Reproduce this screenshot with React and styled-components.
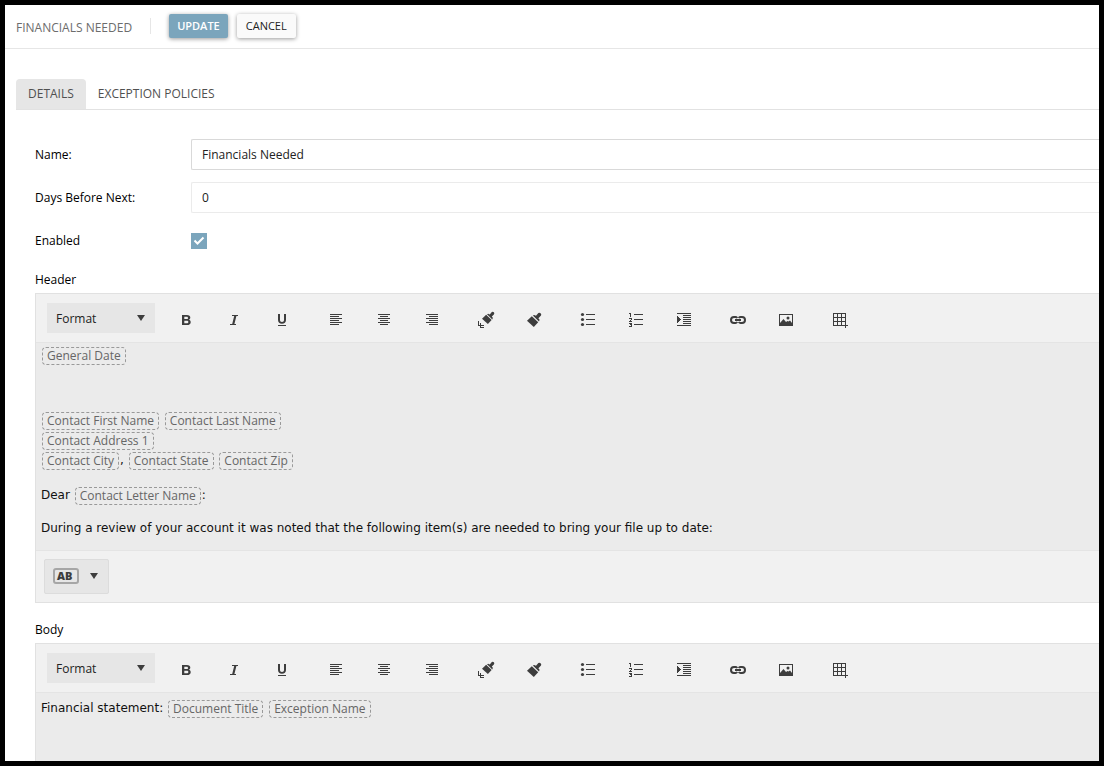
import React from "react";
import styled, { createGlobalStyle, css } from "styled-components";

const ui = `"Open Sans", "Noto Sans", sans-serif`;
const letter = `"DejaVu Sans", Verdana, sans-serif`;
const ink = "#3d3d3d";

const GlobalStyle = createGlobalStyle`
  *, *::before, *::after { box-sizing: border-box; }
  body { margin: 0; font-family: ${ui}; font-size: 12px; font-weight: 500; color: #000; background: #000; }
  button, input, select { font: inherit; }
`;

const Page = styled.div`
  height: 100vh;
  overflow: hidden;
  border: 5px solid #000;
  background: #fff;
`;

const TitleBar = styled.header`
  display: flex;
  align-items: center;
  height: 44px;
  padding: 0 11px 1px;
  border-bottom: 1px solid #e6e6e6;
`;

const Title = styled.h1`
  margin: 0;
  padding: 4px 18px 0 0;
  font-size: 12px;
  line-height: 16px;
  font-weight: 500;
  color: #6c6c6c;
`;

const Divider = styled.span`
  width: 1px;
  height: 16px;
  margin-right: 18px;
  background: #e6e6e6;
`;

const ActionButton = styled.button`
  height: 24px;
  margin-right: 9px;
  padding: 0 ${(p) => (p.$primary ? "8px" : "9px")};
  border: 0;
  border-radius: 2px;
  font-size: 11px;
  line-height: 24px;
  font-weight: ${(p) => (p.$primary ? 600 : 500)};
  color: ${(p) => (p.$primary ? "#fff" : "#222")};
  background: ${(p) => (p.$primary ? "#7ba5bc" : "#fafafa")};
  box-shadow: 0 1px 4px rgba(0, 0, 0, 0.4);
`;

const Tabs = styled.nav`
  display: flex;
  margin: 30px 0 0 11px;
  border-bottom: 1px solid #e2e2e2;
`;

const Tab = styled.button`
  height: 30px;
  padding: 0 12px 2px;
  border: 0;
  border-radius: 4px 4px 0 0;
  color: #505050;
  background: ${(p) => (p.$active ? "#e6e6e6" : "transparent")};
`;

const Form = styled.form`
  padding: 29px 0 0 30px;
`;

const Field = styled.div`
  display: flex;
  align-items: center;
  height: 31px;
  margin-bottom: 12px;
`;

const FieldLabel = styled.label`
  width: 156px;
  flex: none;
`;

const TextInput = styled.input`
  flex: 1;
  min-width: 0;
  height: 31px;
  padding: 0 10px;
  border: 1px solid ${(p) => (p.$soft ? "#ebebeb" : "#d9d9d9")};
  border-right: 0;
  border-radius: 2px 0 0 2px;
  color: #222;
  background: #fff;
`;

const CheckBoxWrap = styled.span`
  display: grid;
  width: 16px;
  height: 16px;

  > * { grid-area: 1 / 1; }
  svg { pointer-events: none; visibility: hidden; }
  input:checked + svg { visibility: visible; }
`;

const CheckBox = styled.input`
  appearance: none;
  width: 16px;
  height: 16px;
  margin: 0;
  border: 1px solid #7ba5bc;
  &:checked { background: #7ba5bc; }
`;

const EditorSection = styled.section`
  margin-bottom: 15px;
`;

const EditorLabel = styled.h2`
  margin: 0 0 1px;
  font-size: 12px;
  line-height: 24px;
  font-weight: 500;
`;

const EditorFrame = styled.div`
  border: 1px solid #e1e1e1;
  border-right: 0;
  background: #f1f1f1;
`;

const Toolbar = styled.div`
  display: flex;
  align-items: center;
  gap: 6px;
  height: 49px;
  padding-left: 11px;
  border-bottom: 1px solid #e4e4e4;
`;

const FormatWrap = styled.span`
  display: grid;
  align-items: center;
  width: 108px;

  > * { grid-area: 1 / 1; }
  svg { justify-self: end; margin-right: 9px; pointer-events: none; }
`;

const FormatSelect = styled.select`
  appearance: none;
  width: 108px;
  height: 30px;
  padding: 0 9px;
  border: 0;
  color: #222;
  background: #e6e6e6;
`;

const ToolGroup = styled.div`
  display: flex;
`;

const ToolButton = styled.button`
  display: flex;
  align-items: center;
  justify-content: center;
  width: 48px;
  height: 30px;
  padding: 4px 0 0 2px;
  border: 0;
  background: transparent;
  color: ${ink};

  svg { display: block; }
`;

const Content = styled.div`
  min-height: ${(p) => (p.$tall ? "207px" : "0")};
  padding: 2px 5px 13px;
  background: #ebebeb;
  font-family: ${letter};
  font-size: 12px;
  font-weight: 400;
  color: #111;
`;

const Paragraph = styled.p`
  margin: 0;
  min-height: 15px;
  line-height: 20px;

  & + & { margin-top: 15px; }

  ${(p) => p.$leading === "tight" && css`line-height: 17px;`}
  ${(p) => p.$leading === "loose" && css`line-height: 26px;`}
`;

const Chip = styled.span`
  display: inline-block;
  height: 18px;
  margin: 0 1px;
  padding: 0 4px;
  border: 1px dashed #999;
  border-radius: 4px;
  font-family: ${ui};
  font-size: 12px;
  line-height: 16px;
  font-weight: 500;
  color: #666;
  vertical-align: middle;
`;

const EditorFooter = styled.div`
  padding: 8px;
  border-top: 1px solid #e4e4e4;
`;

const FieldButton = styled.button`
  display: flex;
  align-items: center;
  justify-content: space-between;
  width: 65px;
  height: 35px;
  padding: 0 9px 1px 8px;
  border: 1px solid #dcdcdc;
  border-radius: 2px;
  background: #e6e6e6;
`;

const FieldBadge = styled.span`
  width: 26px;
  height: 16px;
  padding-left: 2px;
  border: 2px solid #a6a6a6;
  border-radius: 3px;
  font-size: 11px;
  line-height: 12px;
  font-weight: 800;
  text-align: left;
  color: ${ink};
`;

const Caret = () => (
  <svg width="10" height="8" viewBox="0 0 10 8" aria-hidden="true">
    <path d="M1 1h8L5 7z" fill={ink} />
  </svg>
);

const Icon = ({ children, crisp = true }) => (
  <svg
    width="18"
    height="18"
    viewBox="0 0 18 18"
    fill="currentColor"
    shapeRendering={crisp ? "crispEdges" : "auto"}
    aria-hidden="true"
  >
    {children}
  </svg>
);

const brush = (
  <>
    <path d="M2 9.800 6.800 5.200 13.200 11.200 8.800 16z" />
    <path d="M7.800 4.600 9.200 4 11 4.800 13.400 2Q14.600 1.200 15.800 2.400 16.800 3.600 15.800 4.800L13.400 7.200 14.600 8.800 14 10.600z" />
  </>
);

const icons = {
  bold: (
    <Icon crisp={false}>
      <path fillRule="evenodd" d="M5 4h4.800c2.300 0 3.500.9 3.500 2.600 0 1.100-.6 1.900-1.600 2.200 1.300.3 2 1.200 2 2.400 0 1.900-1.400 2.800-3.700 2.800H5zm2.300 1.700v2.400h2.100c1.100 0 1.600-.4 1.600-1.200s-.5-1.200-1.600-1.200zm0 4v2.600h2.400c1.100 0 1.700-.5 1.700-1.300s-.6-1.300-1.700-1.300z" />
    </Icon>
  ),
  italic: (
    <Icon crisp={false}>
      <path d="M7 4h6v1h-1.600L9.400 13H11v1H5v-1h2.200L9.200 5H7z" />
    </Icon>
  ),
  underline: (
    <Icon crisp={false}>
      <path d="M5 3h2v6c0 1.300.7 2 2 2s2-.7 2-2V3h2v6c0 2.400-1.500 3.700-4 3.700S5 11.400 5 9zM5 14h8v1H5z" />
    </Icon>
  ),
  left: <Icon><path d="M3 3h12v1H3zM3 5h9v1H3zM3 7h12v1H3zM3 9h9v1H3zM3 11h12v1H3zM3 13h9v1H3z" /></Icon>,
  center: <Icon><path d="M3 3h12v1H3zM5 5h8v1H5zM3 7h12v1H3zM5 9h8v1H5zM3 11h12v1H3zM5 13h8v1H5z" /></Icon>,
  right: <Icon><path d="M3 3h12v1H3zM6 5h9v1H6zM3 7h12v1H3zM6 9h9v1H6zM3 11h12v1H3zM6 13h9v1H6z" /></Icon>,
  copyFormat: (
    <Icon crisp={false}>
      <g transform="translate(3.300 -0.700) scale(0.860)">{brush}</g>
      <path d="M1 10h1v4h2v1H1zM3 12h1v4h3v1H3zM4 14h3v1H4z" />
    </Icon>
  ),
  applyFormat: <Icon crisp={false}>{brush}</Icon>,
  bullets: (
    <Icon crisp={false}>
      <circle cx="3.500" cy="3.500" r="1.600" /><circle cx="3.500" cy="8.500" r="1.600" /><circle cx="3.500" cy="13.500" r="1.600" />
      <path d="M7 3h9v1H7zM7 8h9v1H7zM7 13h9v1H7z" />
    </Icon>
  ),
  numbers: (
    <Icon>
      <path d="M7 3h9v1H7zM7 8h9v1H7zM7 13h9v1H7z" />
      <path d="M2 2h2v4H3V3H2zM2 7h3v2H4v1h1v1H2v-1h1V9h1V8H2zM2 12h3v4H2v-1h2v-1H3v-1h1H2z" />
    </Icon>
  ),
  indent: (
    <Icon>
      <path d="M2 2h14v1H2zM8 4h8v1H8zM8 6h8v1H8zM8 8h8v1H8zM8 10h8v1H8zM8 12h8v1H8zM2 14h14v1H2z" />
      <path d="M2 5 6 8.500 2 12z" />
    </Icon>
  ),
  link: (
    <Icon crisp={false}>
      <path d="M8.300 7Q7.500 6 6.500 6H5a3 3 0 0 0 0 6h1.500Q7.500 12 8.300 11M9.700 7Q10.500 6 11.500 6H13a3 3 0 0 1 0 6h-1.500Q10.500 12 9.700 11M6 9h6" fill="none" stroke="currentColor" strokeWidth="2" />
    </Icon>
  ),
  image: (
    <Icon crisp={false}>
      <path fillRule="evenodd" d="M2 3h14v12H2zM3 4v8l3.500-4 2.500 3 1.500-1 1 .5L13 9.500l2 2.500V4z" />
      <circle cx="11" cy="7" r="1.500" />
    </Icon>
  ),
  table: (
    <Icon>
      <path fillRule="evenodd" d="M2 2h13v13H2zM3 3v3h3V3zM7 3v3h3V3zM11 3v3h3V3zM3 7v3h3V7zM7 7v3h3V7zM11 7v3h3V7zM3 11v3h3v-3zM7 11v3h3v-3zM11 11v3h3v-3z" />
      <path d="M12 14h5v1h-5zM14 12h1v5h-1z" />
    </Icon>
  ),
};

const toolGroups = [
  [["bold", "Bold"], ["italic", "Italic"], ["underline", "Underline"]],
  [["left", "Align left"], ["center", "Align center"], ["right", "Align right"]],
  [["copyFormat", "Copy format"], ["applyFormat", "Apply format"]],
  [["bullets", "Bulleted list"], ["numbers", "Numbered list"], ["indent", "Indent"]],
  [["link", "Insert link"], ["image", "Insert image"]],
  [["table", "Insert table"]],
];

function Editor({ label, tall, footer, children }) {
  return (
    <EditorSection>
      <EditorLabel>{label}</EditorLabel>
      <EditorFrame>
        <Toolbar>
          <FormatWrap>
            <FormatSelect aria-label={`${label} format`} defaultValue="Format">
              <option>Format</option>
            </FormatSelect>
            <Caret />
          </FormatWrap>
          {toolGroups.map((group) => (
            <ToolGroup key={group[0][0]}>
              {group.map(([name, title]) => (
                <ToolButton key={name} type="button" aria-label={title}>
                  {icons[name]}
                </ToolButton>
              ))}
            </ToolGroup>
          ))}
        </Toolbar>
        <Content $tall={tall}>{children}</Content>
        {footer && (
          <EditorFooter>
            <FieldButton type="button">
              <FieldBadge>AB</FieldBadge>
              <Caret />
            </FieldButton>
          </EditorFooter>
        )}
      </EditorFrame>
    </EditorSection>
  );
}

export default function App() {
  return (
    <>
      <GlobalStyle />
      <Page>
        <TitleBar>
          <Title>FINANCIALS NEEDED</Title>
          <Divider />
          <ActionButton $primary type="button">UPDATE</ActionButton>
          <ActionButton type="button">CANCEL</ActionButton>
        </TitleBar>
        <Tabs>
          <Tab type="button" $active>DETAILS</Tab>
          <Tab type="button">EXCEPTION POLICIES</Tab>
        </Tabs>
        <Form>
          <Field>
            <FieldLabel htmlFor="name">Name:</FieldLabel>
            <TextInput id="name" defaultValue="Financials Needed" />
          </Field>
          <Field>
            <FieldLabel htmlFor="days">Days Before Next:</FieldLabel>
            <TextInput id="days" $soft defaultValue="0" />
          </Field>
          <Field>
            <FieldLabel htmlFor="enabled">Enabled</FieldLabel>
            <CheckBoxWrap>
              <CheckBox id="enabled" type="checkbox" defaultChecked />
              <svg width="16" height="16" viewBox="0 0 16 16" aria-hidden="true">
                <path d="M3.500 7.500 6.500 10.500 12.500 4.500" fill="none" stroke="#fff" strokeWidth="2" />
              </svg>
            </CheckBoxWrap>
          </Field>
          <Editor label="Header" footer>
            <Paragraph><Chip>General Date</Chip></Paragraph>
            <Paragraph />
            <Paragraph>
              <Chip>Contact First Name</Chip> <Chip>Contact Last Name</Chip><br />
              <Chip>Contact Address 1</Chip><br />
              <Chip>Contact City</Chip>, <Chip>Contact State</Chip> <Chip>Contact Zip</Chip>
            </Paragraph>
            <Paragraph>Dear <Chip>Contact Letter Name</Chip>:</Paragraph>
            <Paragraph $leading="tight">
              During a review of your account it was noted that the following item(s) are needed to bring your file up to date:
            </Paragraph>
          </Editor>
          <Editor label="Body" tall>
            <Paragraph $leading="loose">
              Financial statement: <Chip>Document Title</Chip> <Chip>Exception Name</Chip>
            </Paragraph>
          </Editor>
        </Form>
      </Page>
    </>
  );
}
